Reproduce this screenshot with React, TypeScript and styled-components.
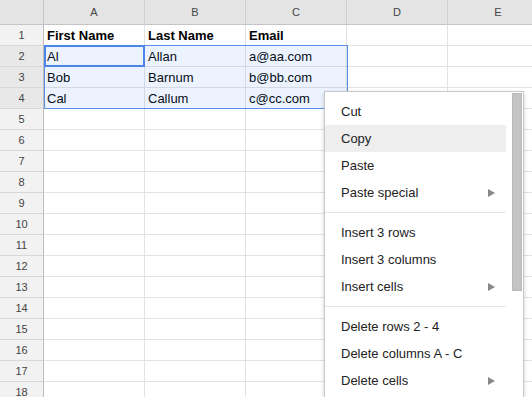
import { Fragment } from "react"
import styled, { createGlobalStyle } from "styled-components"

const GlobalStyle = createGlobalStyle`
  html, body {
    margin: 0;
    padding: 0;
    background: #fff;
  }
  body {
    font-family: "Liberation Sans", Arial, sans-serif;
  }
`

const Viewport = styled.div`
  position: relative;
  width: 532px;
  height: 397px;
  overflow: hidden;
  background: #fff;
`

const Grid = styled.div`
  display: grid;
  grid-template-columns: 44px repeat(5, 101px);
  grid-template-rows: 25px repeat(18, 21px);
  width: max-content;
`

const Corner = styled.div`
  background: #e4e4e4;
  border-right: 1px solid #c4c4c4;
  border-bottom: 1px solid #c4c4c4;
`

const ColHead = styled.div`
  box-sizing: border-box;
  display: flex;
  align-items: center;
  justify-content: center;
  background: #e4e4e4;
  border-right: 1px solid #cfcfcf;
  border-bottom: 1px solid #c4c4c4;
  font-size: 11px;
  color: #444;
`

const RowHead = styled.div<{ $dark?: boolean }>`
  box-sizing: border-box;
  display: flex;
  align-items: center;
  justify-content: center;
  background: ${(p) => (p.$dark ? "#e8e8e8" : "#f2f2f2")};
  border-right: 1px solid #bdbdbd;
  border-bottom: 1px solid #d8d8d8;
  font-size: 11px;
  color: #444;
`

const Cell = styled.div<{ $bold?: boolean }>`
  box-sizing: border-box;
  display: flex;
  align-items: center;
  padding: 0 3px;
  border-right: 1px solid #e2e2e2;
  border-bottom: 1px solid #e2e2e2;
  font-size: 13px;
  font-weight: ${(p) => (p.$bold ? 700 : 400)};
  color: #000;
  white-space: nowrap;
  overflow: hidden;
`

const Selection = styled.div`
  position: absolute;
  left: 44px;
  top: 45px;
  width: 304px;
  height: 64px;
  box-sizing: border-box;
  border: 1px solid #5b8fe6;
  background: rgba(66, 133, 244, 0.1);
  pointer-events: none;
`

const ActiveCell = styled.div`
  position: absolute;
  left: 44px;
  top: 45px;
  width: 101px;
  height: 22px;
  box-sizing: border-box;
  border: 2px solid #4a86e8;
  pointer-events: none;
`

const Menu = styled.div`
  position: absolute;
  left: 324px;
  top: 91px;
  width: 200px;
  box-sizing: border-box;
  display: flex;
  background: #fff;
  border: 1px solid #c8c8c8;
  box-shadow: 0 2px 4px rgba(0, 0, 0, 0.2);
`

const MenuList = styled.div`
  width: 181px;
  padding: 6px 0;
`

const Item = styled.div<{ $hover?: boolean }>`
  display: flex;
  align-items: center;
  justify-content: space-between;
  height: 27px;
  padding: 0 11px 0 16px;
  font-size: 13px;
  color: #222;
  background: ${(p) => (p.$hover ? "#eeeeee" : "transparent")};
`

const Separator = styled.div`
  height: 1px;
  margin: 6px 0;
  background: #e5e5e5;
`

const Track = styled.div`
  width: 10px;
  margin: 1px 1px 0 6px;
`

const Thumb = styled.div`
  height: 198px;
  background: #c4c4c4;
  border: 1px solid #b8b8b8;
  box-sizing: border-box;
`

function Arrow() {
  return (
    <svg width="7" height="8" viewBox="0 0 7 8">
      <polygon points="0,0 7,4 0,8" fill="#888" />
    </svg>
  )
}

const columns = ["A", "B", "C", "D", "E"]

const data: Record<number, string[]> = {
  1: ["First Name", "Last Name", "Email"],
  2: ["Al", "Allan", "a@aa.com"],
  3: ["Bob", "Barnum", "b@bb.com"],
  4: ["Cal", "Callum", "c@cc.com"],
}

type MenuEntry = { label: string; sub?: boolean; hover?: boolean } | "sep"

const menu: MenuEntry[] = [
  { label: "Cut" },
  { label: "Copy", hover: true },
  { label: "Paste" },
  { label: "Paste special", sub: true },
  "sep",
  { label: "Insert 3 rows" },
  { label: "Insert 3 columns" },
  { label: "Insert cells", sub: true },
  "sep",
  { label: "Delete rows 2 - 4" },
  { label: "Delete columns A - C" },
  { label: "Delete cells", sub: true },
]

export default function App() {
  const rows = Array.from({ length: 18 }, (_, i) => i + 1)
  return (
    <>
      <GlobalStyle />
      <Viewport>
        <Grid>
          <Corner />
          {columns.map((c) => (
            <ColHead key={c}>{c}</ColHead>
          ))}
          {rows.map((r) => (
            <Fragment key={r}>
              <RowHead $dark={r >= 2 && r <= 4}>{r}</RowHead>
              {columns.map((c, i) => (
                <Cell key={c} $bold={r === 1}>
                  {data[r]?.[i] ?? ""}
                </Cell>
              ))}
            </Fragment>
          ))}
        </Grid>
        <Selection />
        <ActiveCell />
        <Menu>
          <MenuList>
            {menu.map((m, i) =>
              m === "sep" ? (
                <Separator key={i} />
              ) : (
                <Item key={i} $hover={m.hover}>
                  <span>{m.label}</span>
                  {m.sub && <Arrow />}
                </Item>
              )
            )}
          </MenuList>
          <Track>
            <Thumb />
          </Track>
        </Menu>
      </Viewport>
    </>
  )
}
